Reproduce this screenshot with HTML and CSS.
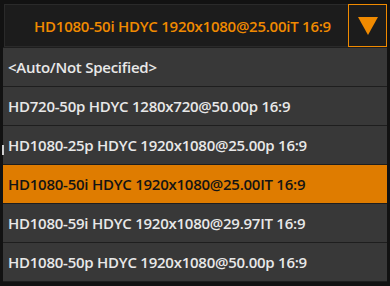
FILE: index.html
```html
<!DOCTYPE html>
<html>
<head>
<meta charset="utf-8">
<link rel="stylesheet" href="styles.css">
</head>
<body>
<div class="combo">
  <div class="head">
    <div class="current">HD1080-50i HDYC 1920x1080@25.00iT 16:9</div>
    <div class="btn"><svg width="20" height="18" viewBox="0 0 20 18"><polygon points="0,0 20,0 10,18" fill="#f08a00"/></svg></div>
  </div>
  <ul class="list">
    <li class="item">&lt;Auto/Not Specified&gt;</li>
    <li class="item">HD720-50p HDYC 1280x720@50.00p 16:9</li>
    <li class="item">HD1080-25p HDYC 1920x1080@25.00p 16:9</li>
    <li class="item selected">HD1080-50i HDYC 1920x1080@25.00IT 16:9</li>
    <li class="item">HD1080-59i HDYC 1920x1080@29.97IT 16:9</li>
    <li class="item">HD1080-50p HDYC 1920x1080@50.00p 16:9</li>
  </ul>
  <span class="caret"></span>
</div>
</body>
</html>
```
FILE: styles.css
```css
html, body {
  margin: 0;
  padding: 0;
  background: #121212;
  width: 390px;
  height: 286px;
  overflow: hidden;
}
.combo {
  position: relative;
  padding: 4px 3px 0 3px;
  font-family: "Open Sans", "Noto Sans", sans-serif;
  font-weight: 600;
  font-size: 15px;
  letter-spacing: -0.25px;
}
.head {
  display: flex;
  height: 43px;
  margin-left: 1px;
  background: #1c1c1c;
  box-sizing: border-box;
  border: 1px solid #2a2a2a;
  border-right: none;
}
.current {
  flex: 1;
  display: flex;
  align-items: center;
  justify-content: center;
  padding-left: 12px;
  color: #f08a00;
}
.btn {
  width: 39px;
  box-sizing: border-box;
  border: 1px solid #f08a00;
  margin-top: -1px;
  margin-bottom: -1px;
  display: flex;
  align-items: center;
  justify-content: center;
}
.list {
  list-style: none;
  margin: 0;
  padding: 0;
  background: #1e1e1e;
  border-top: 1px solid #1e1e1e;
}
.item {
  height: 38px;
  display: flex;
  align-items: center;
  padding-left: 5px;
  background: #383838;
  color: #e8e8e8;
  border-bottom: 1px solid #1e1e1e;
}
.item.selected {
  background: #df7c00;
  color: #141414;
}
.caret {
  position: absolute;
  left: 2px;
  top: 145px;
  width: 2px;
  height: 10px;
  background: #cfcfcf;
}
```
